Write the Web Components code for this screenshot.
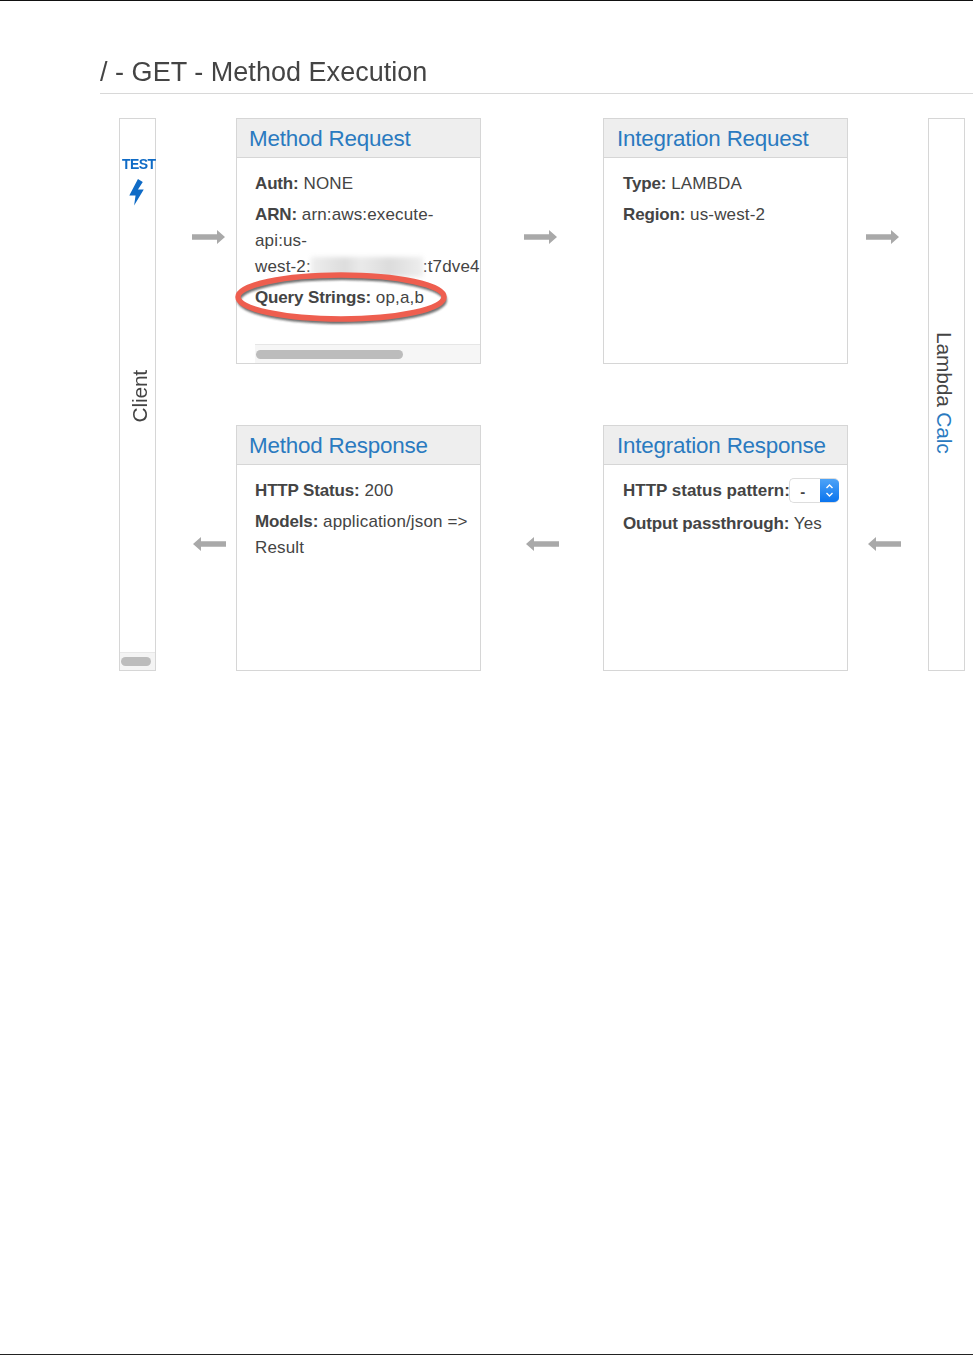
<!DOCTYPE html>
<html>
<head>
<meta charset="utf-8">
<title>Method Execution</title>
<style>
html, body { margin: 0; background: #fff; }
body { font-family: "Liberation Sans", Arial, sans-serif; color: #444; }
exec-card b { letter-spacing: -0.15px; }
</style>
</head>
<body>
<exec-page heading="/ - GET - Method Execution">
  <exec-side slot="client" scrollbar top-test>Client</exec-side>
  <exec-arrow slot="a1"></exec-arrow>
  <exec-card slot="mreq" title-text="Method Request" scrollbar>
    <p><b>Auth:</b> NONE</p>
    <p><b>ARN:</b> arn:aws:execute-<br>api:us-<br>west-2:<exec-blur></exec-blur>:t7dve4</p>
    <p><b>Query Strings:</b> op,a,b</p>
    <exec-ring slot="over"></exec-ring>
  </exec-card>
  <exec-arrow slot="a2"></exec-arrow>
  <exec-card slot="ireq" title-text="Integration Request" inset>
    <p><b>Type:</b> LAMBDA</p>
    <p><b>Region:</b> us-west-2</p>
  </exec-card>
  <exec-arrow slot="a3"></exec-arrow>
  <exec-side slot="lambda" flip>Lambda <span style="color:#2a7ac0">Calc</span></exec-side>
  <exec-arrow slot="a4" left></exec-arrow>
  <exec-card slot="mres" title-text="Method Response">
    <p><b>HTTP Status:</b> 200</p>
    <p><b>Models:</b> application/json =&gt;<br>Result</p>
  </exec-card>
  <exec-arrow slot="a5" left></exec-arrow>
  <exec-card slot="ires" title-text="Integration Response" inset>
    <p style="display:flex;align-items:center;height:26px;margin-bottom:7px"><b style="letter-spacing:0">HTTP status pattern:</b><exec-select>-</exec-select></p>
    <p><b>Output passthrough:</b> Yes</p>
  </exec-card>
  <exec-arrow slot="a6" left></exec-arrow>
</exec-page>
<script>
class ExecPage extends HTMLElement {
  constructor() {
    super();
    this.attachShadow({mode: 'open'}).innerHTML = `
<style>
:host { display: block; box-sizing: border-box; height: 1355px; border-top: 1px solid #111; border-bottom: 1px solid #222; filter: blur(0.35px); overflow: hidden; }
h1 { margin: 57px 0 0 100px; padding-bottom: 6px; height: 29px; line-height: 29px; font-size: 27px; font-weight: 400; color: #444; letter-spacing: 0.03px; border-bottom: 1px solid #d8d8d8; }
.grid { display: grid; margin: 24px 0 0 119px; grid-template-columns: 37px 80px 245px 122px 245px 80px 37px; grid-template-rows: 246px 61px 246px; }
.client { grid-column: 1; grid-row: 1 / 4; display: flex; }
.lambda { grid-column: 7; grid-row: 1 / 4; display: flex; }
.a { display: flex; align-items: center; padding-bottom: 8px; }
</style>
<h1></h1>
<div class="grid">
  <div class="client"><slot name="client"></slot></div>
  <div class="a" style="grid-column:2;grid-row:1;padding-left:36px"><slot name="a1"></slot></div>
  <div style="grid-column:3;grid-row:1;display:flex"><slot name="mreq"></slot></div>
  <div class="a" style="grid-column:4;grid-row:1;padding-left:43px"><slot name="a2"></slot></div>
  <div style="grid-column:5;grid-row:1;display:flex"><slot name="ireq"></slot></div>
  <div class="a" style="grid-column:6;grid-row:1;padding-left:18px"><slot name="a3"></slot></div>
  <div class="lambda"><slot name="lambda"></slot></div>
  <div class="a" style="grid-column:2;grid-row:3;padding-left:37px"><slot name="a4"></slot></div>
  <div style="grid-column:3;grid-row:3;display:flex"><slot name="mres"></slot></div>
  <div class="a" style="grid-column:4;grid-row:3;padding-left:45px"><slot name="a5"></slot></div>
  <div style="grid-column:5;grid-row:3;display:flex"><slot name="ires"></slot></div>
  <div class="a" style="grid-column:6;grid-row:3;padding-left:20px"><slot name="a6"></slot></div>
</div>`;
    this.shadowRoot.querySelector('h1').textContent = this.getAttribute('heading');
  }
}

class ExecCard extends HTMLElement {
  constructor() {
    super();
    this.attachShadow({mode: 'open'}).innerHTML = `
<style>
:host { display: flex; flex-direction: column; box-sizing: border-box; width: 245px; height: 246px; border: 1px solid #d6d6d6; position: relative; background: #fff; }
.title { flex: none; box-sizing: border-box; height: 39px; line-height: 40px; padding-left: 12px; background: #eee; border-bottom: 1px solid #d6d6d6; font-size: 22.4px; color: #2a7ac0; letter-spacing: -0.2px; }
.body { flex: 1; padding: 13px 0 0 18px; overflow: hidden; min-height: 0; }
:host([inset]) .title { padding-left: 13px; }
:host([inset]) .body { padding-left: 19px; }
::slotted(p) { margin: 0 0 5px; font-size: 17px; line-height: 26px; color: #444; letter-spacing: 0.15px; white-space: nowrap; }
.bar { flex: none; height: 18px; margin-left: 18px; background: #f6f6f6; border-top: 1px solid #e6e6e6; display: none; align-items: center; }
.bar i { display: block; width: 147px; height: 9px; margin-left: 1px; border-radius: 5px; background: #bcbcbc; }
:host([scrollbar]) .bar { display: flex; }
</style>
<div class="title"></div>
<div class="body"><slot></slot></div>
<div class="bar"><i></i></div>
<slot name="over"></slot>`;
    this.shadowRoot.querySelector('.title').textContent = this.getAttribute('title-text');
  }
}

class ExecSide extends HTMLElement {
  constructor() {
    super();
    this.attachShadow({mode: 'open'}).innerHTML = `
<style>
:host { display: flex; flex-direction: column; box-sizing: border-box; width: 37px; height: 553px; border: 1px solid #d6d6d6; background: #fff; position: relative; }
.mid { flex: 1; display: flex; align-items: center; justify-content: center; font-size: 21px; color: #444; letter-spacing: -0.2px; min-height: 0; }
.mid span { writing-mode: vertical-rl; transform: rotate(180deg); white-space: nowrap; }
:host([flip]) .mid span { transform: none; }
.test { display: none; flex: none; flex-direction: column; padding: 37px 0 0 2px; color: #0f6bc6; font-size: 14px; font-weight: 700; line-height: 17px; letter-spacing: -0.6px; height: 50px; }
.test svg { display: block; margin: 6px 0 0 7px; }
:host([top-test]) .test { display: flex; }
:host([top-test]) .mid { padding: 0 0 66px 5px; }
:host([flip]) .mid { padding: 0 6px 0 0; margin-top: -4px; }
.bar { display: none; flex: none; height: 18px; background: #f4f4f4; border-top: 1px solid #e8e8e8; box-sizing: border-box; align-items: center; padding-left: 1px; }
.bar i { display: block; width: 30px; height: 9px; border-radius: 5px; background: #bcbcbc; }
:host([scrollbar]) .bar { display: flex; }
</style>
<div class="test">TEST
  <svg width="16" height="28" viewBox="0 0 16 28"><path d="M9 0 L0 17 L6.5 17 L5 27.5 L15 11 L9 11 L14 3 Z" fill="#0f6bc6"/></svg>
</div>
<div class="mid"><span><slot></slot></span></div>
<div class="bar"><i></i></div>`;
  }
}

class ExecArrow extends HTMLElement {
  constructor() {
    super();
    this.attachShadow({mode: 'open'}).innerHTML = `
<style>
:host { display: block; width: 33px; height: 14px; }
:host([left]) svg { transform: scaleX(-1); }
svg { display: block; }
</style>
<svg width="33" height="14" viewBox="0 0 33 14"><path d="M0 4.3 H25 V0 L33 7 L25 14 V9.7 H0 Z" fill="#a9a9a9"/></svg>`;
  }
}

class ExecBlur extends HTMLElement {
  constructor() {
    super();
    this.attachShadow({mode: 'open'}).innerHTML = `
<style>
:host { display: inline-block; width: 112px; height: 20px; vertical-align: -5px; background: linear-gradient(90deg, #eee, #ddd 30%, #eaeaea 45%, #dcdcdc 70%, #eee); filter: blur(2.5px); }
</style>`;
  }
}

class ExecRing extends HTMLElement {
  constructor() {
    super();
    this.attachShadow({mode: 'open'}).innerHTML = `
<style>
:host { position: absolute; left: -4px; top: 149px; width: 220px; height: 60px; display: block; pointer-events: none; }
svg { display: block; overflow: visible; }
</style>
<svg width="220" height="60" viewBox="0 0 220 60">
  <defs><filter id="s" x="-10%" y="-30%" width="120%" height="170%"><feGaussianBlur stdDeviation="1.2"/></filter></defs>
  <ellipse cx="109" cy="32" rx="103" ry="22" fill="none" stroke="#333" stroke-width="4" opacity=".7" filter="url(#s)"/>
  <ellipse cx="108" cy="29" rx="103" ry="22" fill="none" stroke="#ee5e4f" stroke-width="5.5"/>
</svg>`;
  }
}

class ExecSelect extends HTMLElement {
  constructor() {
    super();
    this.attachShadow({mode: 'open'}).innerHTML = `
<style>
:host { display: flex; flex: none; box-sizing: border-box; width: 50px; height: 25px; margin: -1px 0 0 -1px; border: 1px solid #ddd; border-right: 0; border-radius: 5px; overflow: hidden; background: #fff; font-weight: 700; font-size: 15px; }
.v { flex: 1; text-align: center; line-height: 26px; padding-right: 4px; }
.b { width: 19px; background: linear-gradient(#4da3f7, #0a74ee); display: flex; align-items: center; justify-content: center; }
</style>
<div class="v"><slot></slot></div>
<div class="b"><svg width="9" height="15" viewBox="0 0 9 15"><path d="M1.5 5 L4.5 2 L7.5 5 M1.5 10 L4.5 13 L7.5 10" fill="none" stroke="#fff" stroke-width="1.4"/></svg></div>`;
  }
}

customElements.define('exec-page', ExecPage);
customElements.define('exec-card', ExecCard);
customElements.define('exec-side', ExecSide);
customElements.define('exec-arrow', ExecArrow);
customElements.define('exec-blur', ExecBlur);
customElements.define('exec-ring', ExecRing);
customElements.define('exec-select', ExecSelect);
</script>
</body>
</html>
